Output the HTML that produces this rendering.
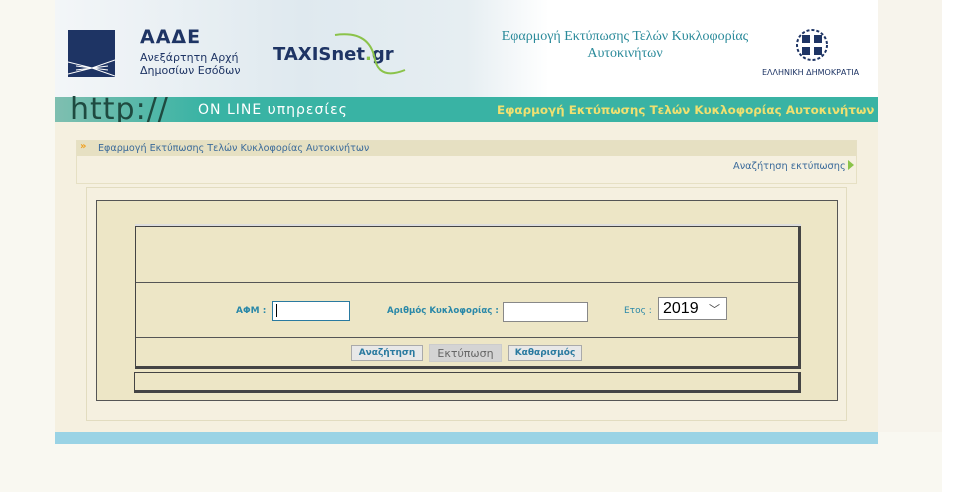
<!DOCTYPE html>
<html><head><meta charset="utf-8"><style>
*{margin:0;padding:0;box-sizing:border-box}
body{width:954px;height:492px;background:#f9f8f1;font-family:"DejaVu Sans","Liberation Sans",sans-serif;position:relative;overflow:hidden}
.a{position:absolute;white-space:nowrap}
.lbl{color:#2a88a8;font-size:9px;font-weight:bold}
.btn{position:absolute;height:16px;border:1px solid #aaa;background:#e8e8e8;font-size:9px;font-weight:bold;color:#2a7aa0;text-align:center;line-height:14px}
</style></head><body>
<div class="a" style="left:942px;top:0;width:12px;height:492px;background:#fff"></div>
<div class="a" style="left:55px;top:0;width:823px;height:97px;background:linear-gradient(90deg,#f3f6f8 0%,#dfe9ef 30%,#e6eef2 50%,#fff 60%,#fff 100%)"></div>
<div class="a" style="left:878px;top:0;width:64px;height:432px;background:#f7f4ec"></div>
<svg class="a" style="left:68px;top:30px" width="47" height="47"><rect width="47" height="47" fill="#1e3464"/><path d="M0 32 L24 38 L47 30 M0 44 L24 38 L47 46 M8 36 L40 40 M8 40 L40 36" stroke="#fff" stroke-width="1" fill="none"/></svg>
<div class="a" style="left:140px;top:26px;font-size:19px;font-weight:bold;color:#1e3464;letter-spacing:1px">ΑΑΔΕ</div>
<div class="a" style="left:140px;top:51px;font-size:11px;color:#1e3464;line-height:13px">Ανεξάρτητη Αρχή<br>Δημοσίων Εσόδων</div>
<div class="a" style="left:273px;top:44px;font-size:18px;font-weight:bold;color:#1e3464">TAXISnet<span style="color:#8bc34a">.</span>gr</div>
<svg class="a" style="left:330px;top:30px" width="80" height="55"><path d="M5 5 Q40 0 45 30 Q50 50 75 40" stroke="#8bc34a" stroke-width="2" fill="none"/></svg>
<div class="a" style="left:490px;top:28px;width:270px;text-align:center;font-family:'Liberation Serif',serif;font-size:14px;color:#2a8a9a;line-height:17px">Εφαρμογή Εκτύπωσης Τελών Κυκλοφορίας<br>Αυτοκινήτων</div>
<svg class="a" style="left:794px;top:28px" width="36" height="34"><circle cx="18" cy="17" r="15" fill="none" stroke="#1e3464" stroke-width="2" stroke-dasharray="3 2"/><rect x="8" y="7" width="20" height="20" fill="#1e3464"/><rect x="16" y="7" width="4" height="20" fill="#fff"/><rect x="8" y="15" width="20" height="4" fill="#fff"/></svg>
<div class="a" style="left:762px;top:68px;font-size:8px;color:#1e3464">ΕΛΛΗΝΙΚΗ ΔΗΜΟΚΡΑΤΙΑ</div>
<div class="a" style="left:55px;top:97px;width:823px;height:25px;background:#39b3a4"></div>
<div class="a" style="left:55px;top:97px;width:150px;height:25px;background:linear-gradient(90deg,#7fbfb0,#39b3a4)"></div>
<div class="a" style="left:70px;top:92px;font-size:30px;color:#1e4a40;letter-spacing:1px">http://</div>
<div class="a" style="left:198px;top:102px;font-size:14px;color:#fff;letter-spacing:1px">ON LINE υπηρεσίες</div>
<div class="a" style="left:497px;top:103px;font-size:11.9px;font-weight:bold;color:#f0e070">Εφαρμογή Εκτύπωσης Τελών Κυκλοφορίας Αυτοκινήτων</div>
<div class="a" style="left:55px;top:122px;width:823px;height:310px;background:#f5f0e0"></div>
<div class="a" style="left:76px;top:140px;width:781px;height:44px;background:#f5f0e0;border:1px solid #e6e0c4"></div>
<div class="a" style="left:77px;top:141px;width:779px;height:15px;background:#e6e0c2"></div>
<div class="a" style="left:80px;top:141px;font-size:10px;color:#f0a020;font-weight:bold">»</div>
<div class="a" style="left:98px;top:143px;font-size:9.6px;color:#3a6a9a">Εφαρμογή Εκτύπωσης Τελών Κυκλοφορίας Αυτοκινήτων</div>
<div class="a" style="left:733px;top:161px;font-size:9.8px;color:#3a6a9a">Αναζήτηση εκτύπωσης</div>
<div class="a" style="left:848px;top:160px;width:0;height:0;border-left:6px solid #8bc34a;border-top:5px solid transparent;border-bottom:5px solid transparent"></div>
<div class="a" style="left:86px;top:187px;width:761px;height:234px;background:#f5f0e0;border:1px solid #e2dcc0"></div>
<div class="a" style="left:96px;top:200px;width:742px;height:201px;background:#ede6c6;border:1px solid #555"></div>
<div class="a" style="left:135px;top:226px;width:666px;height:143px;background:#ede6c6;border-top:1px solid #444;border-left:1px solid #444;border-right:3px solid #444;border-bottom:3px solid #444;box-shadow:0 -2px 0 #ddd"></div>
<div class="a" style="left:136px;top:282px;width:662px;height:1px;background:#555"></div>
<div class="a" style="left:136px;top:337px;width:662px;height:1px;background:#555"></div>
<div class="a" style="left:134px;top:372px;width:667px;height:21px;background:#ede6c6;border-top:1px solid #444;border-left:1px solid #444;border-right:3px solid #444;border-bottom:3px solid #444"></div>
<div class="a lbl" style="left:236px;top:306px">ΑΦΜ :</div>
<div class="a" style="left:272px;top:301px;width:78px;height:20px;background:#fff;border:1px solid #2a7aa0"></div>
<div class="a" style="left:276px;top:304px;width:1px;height:13px;background:#000"></div>
<div class="a lbl" style="left:387px;top:306px;font-size:8.6px">Αριθμός Κυκλοφορίας :</div>
<div class="a" style="left:503px;top:302px;width:85px;height:20px;background:#fff;border:1px solid #888"></div>
<div class="a" style="left:624px;top:306px;font-size:9px;color:#2a88a8">Ετος :</div>
<div class="a" style="left:658px;top:297px;width:69px;height:23px;background:#fff;border:1px solid #888;font-family:'Liberation Sans',sans-serif;font-size:16px;line-height:21px;padding-left:4px">2019 <span style="font-size:11px;color:#444;margin-left:6px">﹀</span></div>
<div class="btn" style="left:351px;top:345px;width:72px">Αναζήτηση</div>
<div class="btn" style="left:429px;top:344px;width:73px;height:18px;background:#d4d4d4;border-color:#ccc;font-weight:normal;color:#666;font-size:11px;line-height:17px">Εκτύπωση</div>
<div class="btn" style="left:508px;top:345px;width:74px">Καθαρισμός</div>
<div class="a" style="left:55px;top:432px;width:823px;height:12px;background:#9ad3e5"></div>
</body></html>
